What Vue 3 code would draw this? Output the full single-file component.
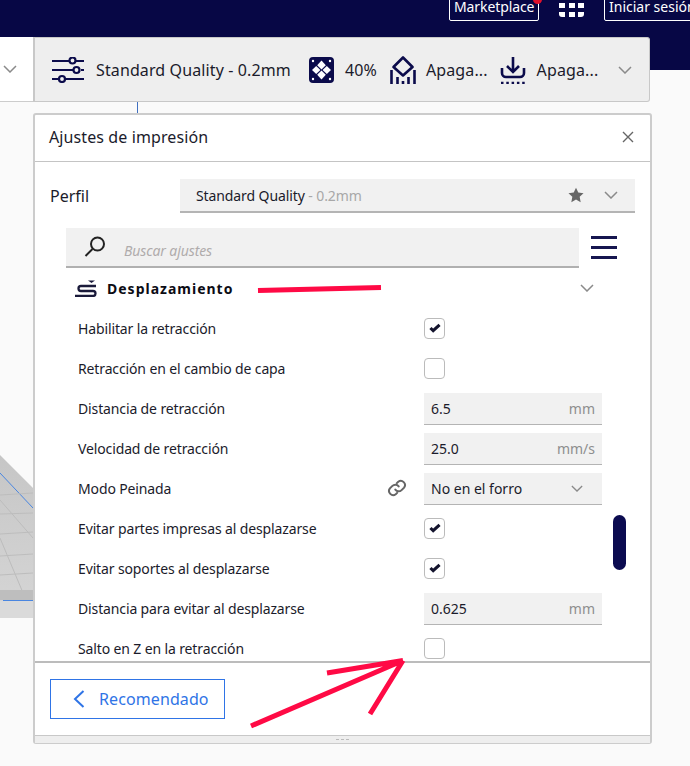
<script setup>
const rows = [
  { label: 'Habilitar la retracción', type: 'check', on: true },
  { label: 'Retracción en el cambio de capa', type: 'check', on: false },
  { label: 'Distancia de retracción', type: 'input', value: '6.5', unit: 'mm' },
  { label: 'Velocidad de retracción', type: 'input', value: '25.0', unit: 'mm/s' },
  { label: 'Modo Peinada', type: 'select', value: 'No en el forro', link: true },
  { label: 'Evitar partes impresas al desplazarse', type: 'check', on: true },
  { label: 'Evitar soportes al desplazarse', type: 'check', on: true },
  { label: 'Distancia para evitar al desplazarse', type: 'input', value: '0.625', unit: 'mm' },
  { label: 'Salto en Z en la retracción', type: 'check', on: false },
]
</script>

<template>
  <div class="page">
    <header class="topbar">
      <div class="top-btn market">Marketplace<span class="dot"></span></div>
      <div class="apps">
        <i></i><i></i><i></i><i></i><i></i><i></i>
      </div>
      <div class="top-btn login">Iniciar sesión</div>
    </header>

    <div class="toolbar">
      <div class="machine">
        <svg class="chev" width="14" height="8" viewBox="0 0 14 8"><path d="M1 1l6 6 6-6" /></svg>
      </div>
      <div class="stage">
        <svg class="i-quality" width="33" height="26" viewBox="0 0 33 26" fill="none" stroke="#0b0b4b" stroke-width="2.200">
          <path d="M0 4h18M24 4h8M0 13h21M29 13h3M0 22h6M12 22h20" />
          <circle cx="20.500" cy="3.500" r="3" /><circle cx="24.500" cy="13" r="3" /><circle cx="10" cy="22" r="3" />
        </svg>
        <span class="t-quality">Standard Quality - 0.2mm</span>
        <svg class="i-infill" width="25" height="26" viewBox="0 0 25 26">
          <rect width="25" height="26" rx="4" fill="#0b0b4b" />
          <g fill="#fff">
            <path d="M12.500 3.500l4.300 4.700-4.300 4.300-4.300-4.300z" />
            <path d="M12.500 13.500l4.300 4.300-4.300 4.700-4.300-4.700z" />
            <path d="M7.200 9l4.200 4-4.200 4L3 13z" />
            <path d="M17.800 9l4.200 4-4.200 4-4.200-4z" />
            <circle cx="4" cy="4" r="1.200" /><circle cx="21" cy="4" r="1.200" />
            <circle cx="4" cy="22" r="1.200" /><circle cx="21" cy="22" r="1.200" />
          </g>
        </svg>
        <span class="t-infill">40%</span>
        <svg class="i-support" width="26" height="28" viewBox="0 0 26 28" fill="none" stroke="#0b0b4b" stroke-width="2.600">
          <path d="M13 1.500l9.500 9.500-9.500 8.500L3.500 11z" stroke-linejoin="round" />
          <path d="M1.500 28V14M24.500 28V14M7.500 28v-7M13 28v-3M18.500 28v-7" />
        </svg>
        <span class="t-support">Apaga...</span>
        <svg class="i-adhesion" width="26" height="28" viewBox="0 0 26 28" fill="none" stroke="#0b0b4b" stroke-width="2.600">
          <path d="M13 1v14M7 10l6 6 6-6" />
          <path d="M2 12v5a4 4 0 0 0 4 4h14a4 4 0 0 0 4-4v-5" />
          <path d="M1 27h24" stroke-dasharray="2.500 2.800" />
        </svg>
        <span class="t-adhesion">Apaga...</span>
        <svg class="chev" width="14" height="8" viewBox="0 0 14 8"><path d="M1 1l6 6 6-6" /></svg>
      </div>
    </div>

    <div class="connector"></div>

    <section class="panel">
      <div class="panel-head">
        <span>Ajustes de impresión</span>
        <svg width="12" height="12" viewBox="0 0 12 12" fill="none" stroke="#666" stroke-width="1.400"><path d="M1 1l10 10M11 1L1 11" /></svg>
      </div>

      <div class="profile">
        <span class="profile-label">Perfil</span>
        <div class="profile-box">
          <span class="profile-name">Standard Quality<em> - 0.2mm</em></span>
          <svg class="star" width="16" height="16" viewBox="0 0 24 24" fill="#666"><path d="M12 1l3.400 7.300 7.900 1-5.800 5.500 1.500 7.900-7-3.900-7 3.900 1.500-7.900L.7 9.300l7.900-1z" /></svg>
          <svg class="chev" width="14" height="8" viewBox="0 0 14 8"><path d="M1 1l6 6 6-6" /></svg>
        </div>
      </div>

      <div class="search-row">
        <div class="search">
          <svg width="22" height="21" viewBox="0 0 22 21" fill="none" stroke="#222" stroke-width="2">
            <circle cx="13.500" cy="8" r="6.500" /><path d="M8.500 13L1.500 20" />
          </svg>
          <span>Buscar ajustes</span>
        </div>
        <div class="burger"><i></i><i></i><i></i></div>
      </div>

      <div class="settings">
        <div class="section">
          <svg width="22" height="17" viewBox="0 0 22 17" fill="none" stroke="#1a1a3a" stroke-width="2.300">
            <path d="M21 6H6a2.500 2.500 0 0 0 0 5h12a2.500 2.500 0 0 1 0 5H0" /><path d="M13 .5h7l-3.500 2.500z" fill="#1a1a3a" stroke="none" />
          </svg>
          <strong>Desplazamiento</strong>
          <svg class="chev" width="14" height="8" viewBox="0 0 14 8"><path d="M1 1l6 6 6-6" /></svg>
        </div>

        <div v-for="row in rows" :key="row.label" class="row">
          <span class="row-label">{{ row.label }}</span>
          <svg v-if="row.link" class="link" width="20" height="20" viewBox="0 0 24 24" fill="none" stroke="#666" stroke-width="2.400" stroke-linecap="round">
            <path d="M10 14a5 5 0 0 0 7.500.5l3-3a5 5 0 0 0-7-7l-1.700 1.700" />
            <path d="M14 10a5 5 0 0 0-7.500-.5l-3 3a5 5 0 0 0 7 7l1.700-1.700" />
          </svg>
          <div v-if="row.type === 'check'" class="check">
            <svg v-if="row.on" width="12" height="10" viewBox="0 0 13 11" fill="none" stroke="#14142e" stroke-width="3.400"><path d="M1.500 5.500l3 3L11.500 2" /></svg>
          </div>
          <div v-else-if="row.type === 'input'" class="field">
            <span>{{ row.value }}</span><span class="unit">{{ row.unit }}</span>
          </div>
          <div v-else class="field select">
            <span>{{ row.value }}</span>
            <svg class="chev" width="12" height="7" viewBox="0 0 14 8"><path d="M1 1l6 6 6-6" /></svg>
          </div>
        </div>

        <div class="scroll"></div>
      </div>

      <div class="footer">
        <div class="rec">
          <svg width="12" height="18" viewBox="0 0 12 18" fill="none" stroke="#2f74e6" stroke-width="2"><path d="M10.500 1L2 9l8.500 8" /></svg>
          <span>Recomendado</span>
        </div>
      </div>
      <div class="grip"><i></i><i></i><i></i></div>
    </section>

    <svg class="plate" width="33" height="180" viewBox="0 0 33 180">
      <defs>
        <linearGradient id="plateShade" x1="0" y1="0" x2="0" y2="1">
          <stop offset="0" stop-color="#c6c6c6" /><stop offset="1" stop-color="#d6d6d6" />
        </linearGradient>
      </defs>
      <path d="M0 15L33 48V178H0z" fill="url(#plateShade)" />
      <path d="M0 33L33 68" stroke="#4a86e0" stroke-width="1" fill="none" />
      <path d="M0 55L33 53M0 74L33 73M0 94L33 92M0 116L33 114M0 135L33 133" stroke="#bdbdbd" fill="none" />
      <path d="M0 60L33 98M0 98L26 160" stroke="#bcbcbc" fill="none" />
      <path d="M0 150H33V160H0z" fill="#bebebe" />
      <path d="M3 160.500H33" stroke="#4a86e0" fill="none" />
      <path d="M0 161H33V178H0z" fill="#dadada" />
    </svg>

    <svg class="marks" width="690" height="766" viewBox="0 0 690 766" fill="none" stroke="#ff0a45" stroke-width="5">
      <path d="M258 290.500L381 287.500" />
      <path d="M251 726L403 660.500M327 673L403 660.500M370 714L403 660.500" />
    </svg>
  </div>
</template>

<style>
html, body { margin: 0; padding: 0; background: #fafafa; }
</style>

<style scoped>
.page {
  position: relative;
  width: 690px;
  height: 766px;
  overflow: hidden;
  background: #fafafa;
  font-family: "Noto Sans", sans-serif;
  font-size: 14px;
  color: #1b1b2b;
}
.topbar {
  height: 70px;
  background: #070745;
  display: flex;
  align-items: flex-start;
  color: #fff;
  box-sizing: border-box;
  padding-left: 449px;
}
.top-btn {
  position: relative;
  box-sizing: border-box;
  height: 29px;
  margin-top: -8px;
  border: 1px solid #fff;
  border-radius: 2px;
  font-size: 14px;
  line-height: 27px;
  padding: 0 4px;
  white-space: nowrap;
  flex: none;
}
.market { width: 90px; letter-spacing: -0.100px; }
.dot {
  position: absolute;
  right: -4px;
  top: 2px;
  width: 9px;
  height: 9px;
  border-radius: 50%;
  background: #e0102c;
}
.apps {
  flex: none;
  margin: 3px 0 0 20px;
  width: 25px;
  display: grid;
  grid-template-columns: repeat(3, 6px);
  grid-auto-rows: 5px;
  justify-content: space-between;
  row-gap: 4px;
}
.apps i { background: #fff; }
.apps i:nth-child(4) { border-bottom-left-radius: 3px; }
.apps i:nth-child(6) { border-bottom-right-radius: 3px; }
.login { margin-left: 20px; }

.toolbar {
  display: flex;
  height: 65px;
  margin-top: -33px;
  position: relative;
}
.machine {
  width: 33px;
  box-sizing: border-box;
  background: #fff;
  border-bottom: 1px solid #ccc;
  display: flex;
  align-items: center;
  padding-left: 3px;
}
.stage {
  width: 617px;
  box-sizing: border-box;
  background: #eeeeee;
  border: 1px solid #c8c8c8;
  border-left-width: 2px;
  border-radius: 0 3px 3px 0;
  display: flex;
  align-items: center;
  font-size: 16px;
  padding-left: 17px;
  white-space: nowrap;
}
.stage > span { flex: none; letter-spacing: 0.120px; }
.stage svg { flex: none; }
.t-quality { margin-left: 11px; }
.i-infill { margin-left: 18px; }
.t-infill { margin-left: 11px; }
.i-support { margin-left: 13px; }
.t-support { margin-left: 10px; }
.i-adhesion { margin-left: 12px; }
.t-adhesion { margin-left: 11px; }
.stage .chev { margin-left: 20px; }

.chev { fill: none; stroke: #8a8a8a; stroke-width: 1.500; flex: none; }

.connector {
  width: 1px;
  height: 11px;
  margin-left: 137px;
  background: #3f6fc0;
}
.panel {
  margin-left: 33px;
  width: 619px;
  height: 631px;
  box-sizing: border-box;
  background: #fff;
  border: 2px solid #cccccc;
  border-bottom-width: 1px;
  border-radius: 3px;
  display: flex;
  flex-direction: column;
  position: relative;
}
.panel-head {
  flex: none;
  height: 47px;
  box-sizing: border-box;
  border-bottom: 1px solid #c4c4c4;
  display: flex;
  align-items: center;
  justify-content: space-between;
  padding: 0 16px 2px 14px;
  font-size: 16px;
  letter-spacing: 0.100px;
}
.profile {
  flex: none;
  display: flex;
  align-items: center;
  margin-top: 17px;
  height: 34px;
}
.profile-label { width: 130px; padding-left: 15px; font-size: 16px; flex: none; box-sizing: border-box; }
.profile-box {
  margin-left: 15px;
  width: 455px;
  height: 34px;
  box-sizing: border-box;
  background: #f1f1f1;
  border-bottom: 2px solid #b4b4b4;
  display: flex;
  align-items: center;
  padding-left: 16px;
  padding-right: 17px;
}
.profile-name { flex: 1; font-size: 14px; letter-spacing: -0.100px; }
.profile-name em { font-style: normal; color: #a8a8a8; }
.star { margin-right: 20px; }
.search-row {
  flex: none;
  display: flex;
  margin-top: 15px;
  height: 40px;
  padding-left: 31px;
}
.search {
  width: 513px;
  box-sizing: border-box;
  background: #f1f1f1;
  border-bottom: 2px solid #b0b0b0;
  display: flex;
  align-items: center;
  padding-left: 18px;
  color: #b0acac;
  font-style: italic;
  font-size: 14px;
}
.search svg { margin-right: 18px; margin-top: -2px; }
.search span { margin-top: 6px; letter-spacing: -0.100px; }
.burger {
  margin-left: 12px;
  width: 26px;
  display: flex;
  flex-direction: column;
  gap: 7px;
  padding-top: 8px;
}
.burger i { display: block; height: 3px; background: #16164f; }

.settings {
  flex: 1;
  min-height: 0;
  overflow: hidden;
  position: relative;
}
.section {
  height: 40px;
  display: flex;
  align-items: center;
  padding-left: 40px;
}
.section strong {
  margin-left: 10px;
  font-size: 14px;
  font-weight: 700;
  letter-spacing: 1px;
  color: #0c0c14;
  width: 473px;
  flex: none;
}
.section svg:first-child { flex: none; }
.row {
  height: 40px;
  display: grid;
  grid-template-columns: 1fr 20px 178px;
  column-gap: 16px;
  align-items: center;
  padding: 0 48px 0 43px;
  box-sizing: border-box;
}
.row-label {
  grid-column: 1;
  white-space: nowrap;
  letter-spacing: -0.130px;
}
.link { grid-column: 2; margin-left: -1px; }
.check {
  grid-column: 3;
  width: 21px;
  height: 21px;
  box-sizing: border-box;
  border: 1.500px solid #bbbbbb;
  border-radius: 4px;
  background: #fff;
  display: flex;
  align-items: center;
  justify-content: center;
}
.field {
  grid-column: 3;
  height: 32px;
  margin-top: 1px;
  box-sizing: border-box;
  background: #f1f1f1;
  border-bottom: 1px solid #b4b4b4;
  display: flex;
  align-items: center;
  justify-content: space-between;
  padding: 0 7px;
}
.unit { color: #8e8e8e; }
.select { padding-right: 19px; }
.scroll {
  position: absolute;
  left: 577.500px;
  top: 247px;
  width: 13px;
  height: 55px;
  border-radius: 7px;
  background: #0b0b50;
}
.footer {
  flex: none;
  height: 74px;
  box-sizing: border-box;
  border-top: 2px solid #bcbcbc;
  padding: 16px 0 0 15px;
}
.rec {
  width: 175px;
  height: 40px;
  box-sizing: border-box;
  border: 1px solid #2f74e6;
  display: flex;
  align-items: center;
  padding-left: 22px;
  font-size: 16px;
  letter-spacing: 0.100px;
  color: #2f74e6;
}
.rec span { margin-left: 14px; }
.grip {
  flex: none;
  height: 7px;
  background: #eeeeee;
  border-top: 1px solid #c8c8c8;
  display: flex;
  justify-content: center;
  align-items: center;
  gap: 2px;
}
.grip i { width: 3px; height: 1px; background: #bbb; }
.plate { position: absolute; left: 0; top: 440px; }
.marks { position: absolute; left: 0; top: 0; pointer-events: none; }
</style>
